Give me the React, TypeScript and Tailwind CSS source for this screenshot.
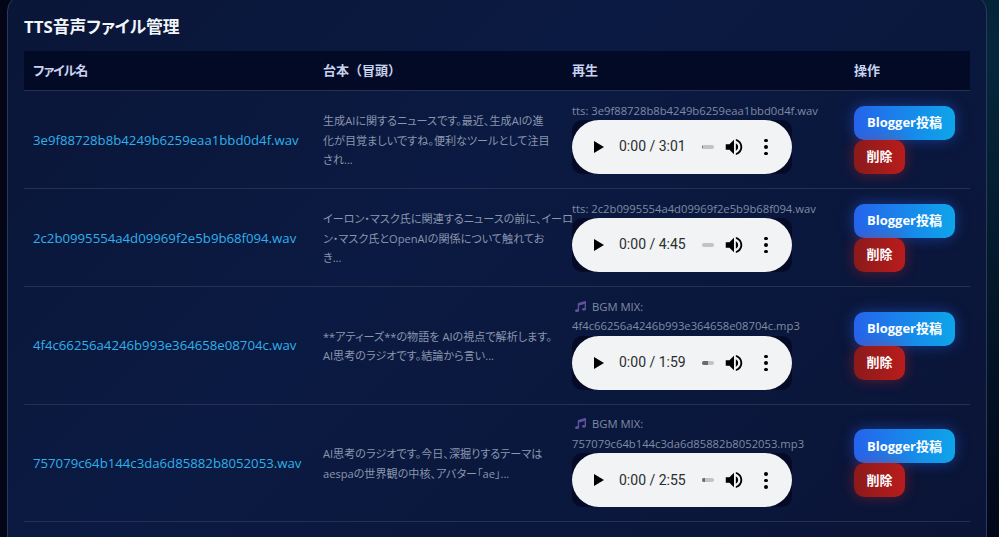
import { FaMusic } from "react-icons/fa";

const rows = [
  {
    file: "3e9f88728b8b4249b6259eaa1bbd0d4f.wav",
    script: ["生成AIに関するニュースです。最近、生成AIの進", "化が目覚ましいですね。便利なツールとして注目", "され..."],
    label: "tts: 3e9f88728b8b4249b6259eaa1bbd0d4f.wav",
    bgm: false,
    time: "3:01",
    progress: 1,
  },
  {
    file: "2c2b0995554a4d09969f2e5b9b68f094.wav",
    script: ["イーロン・マスク氏に関連するニュースの前に、イーロ", "ン・マスク氏とOpenAIの関係について触れてお", "き..."],
    label: "tts: 2c2b0995554a4d09969f2e5b9b68f094.wav",
    bgm: false,
    time: "4:45",
    progress: 0,
  },
  {
    file: "4f4c66256a4246b993e364658e08704c.wav",
    script: ["**アティーズ**の物語を AIの視点で解析します。", "AI思考のラジオです。結論から言い..."],
    label: "4f4c66256a4246b993e364658e08704c.mp3",
    bgm: true,
    time: "1:59",
    progress: 6,
  },
  {
    file: "757079c64b144c3da6d85882b8052053.wav",
    script: ["AI思考のラジオです。今日、深掘りするテーマは", "aespaの世界観の中核、アバター「ae」..."],
    label: "757079c64b144c3da6d85882b8052053.mp3",
    bgm: true,
    time: "2:55",
    progress: 3,
  },
];

function AudioBar({ time, progress }: { time: string; progress: number }) {
  return (
    <div className="w-[220px] h-[54px] rounded-[10px] bg-[#050a26]">
      <div className="flex items-center h-full rounded-full bg-[#f1f3f4] text-[#2b2d2f] font-['Roboto',sans-serif]">
        <svg className="ml-[22px] w-[10px] h-[12px]" viewBox="0 0 10 12">
          <path d="M0 0L10 6L0 12Z" fill="#000" />
        </svg>
        <span className="ml-[15px] w-[83px] text-[14px] whitespace-nowrap">0:00 / {time}</span>
        <div className="w-[12px] h-[4px] rounded-full bg-[#c2c3c4] overflow-hidden">
          <div className="h-full bg-[#6a6b6c]" style={{ width: progress }} />
        </div>
        <svg className="ml-[9px] w-[22px] h-[22px]" viewBox="0 0 24 24">
          <path
            d="M3 9v6h4l5 5V4L7 9H3zm13.5 3c0-1.77-1.02-3.29-2.5-4.03v8.05c1.48-.73 2.5-2.25 2.5-4.02zM14 3.23v2.06c2.89.86 5 3.54 5 6.71s-2.11 5.85-5 6.71v2.06c4.01-.91 7-4.49 7-8.77s-2.99-7.86-7-8.77z"
            fill="#000"
          />
        </svg>
        <div className="ml-[19px] flex flex-col gap-[3px]">
          <span className="w-[3.5px] h-[3.5px] rounded-full bg-black" />
          <span className="w-[3.5px] h-[3.5px] rounded-full bg-black" />
          <span className="w-[3.5px] h-[3.5px] rounded-full bg-black" />
        </div>
      </div>
    </div>
  );
}

export default function App() {
  return (
    <div className="h-[537px] w-[999px] overflow-hidden bg-[radial-gradient(circle_at_100%_10%,#04283a_0%,#020617_45%)] pl-[7px] font-['Open_Sans','Noto_Sans_CJK_JP',sans-serif] [font-feature-settings:'palt']">
      <div className="-mt-[5px] w-[980px] h-[600px] rounded-2xl border border-[#2a3a5e] bg-[linear-gradient(135deg,#0a1638_0%,#0b1a42_40%,#0a1436_100%)] px-4 pt-[15px]">
        <h2 className="h-[40px] text-[16.8px] leading-[32px] font-bold text-[#f1f5f9]">TTS音声ファイル管理</h2>
        <div className="grid grid-cols-[289px_249px_282px_126px] h-[40px] items-center bg-[#030a26] border-b border-[#26314f] text-[13px] font-bold text-[#c7d2ee]">
          <div className="pl-[9px] tracking-[-1px]">ファイル名</div>
          <div className="pl-[10px] [font-feature-settings:normal]">台本（冒頭）</div>
          <div className="pl-[10px]">再生</div>
          <div className="pl-[10px]">操作</div>
        </div>
        {rows.map((row) => (
          <div
            key={row.file}
            className="grid grid-cols-[289px_249px_282px_126px] items-center border-b border-[#26314f]"
          >
            <div className="pl-[9px] pt-[2px] text-[13.2px] text-[#2fb0ea] whitespace-nowrap">{row.file}</div>
            <div className="pl-[10px] pt-[2px] text-[11.1px] leading-[19.5px] text-[#8a96ae] whitespace-nowrap">
              {row.script.map((line) => (
                <div key={line}>{line}</div>
              ))}
            </div>
            <div className="pl-[10px] pt-[9.6px] pb-[13.8px] text-[11.25px] leading-[19.6px] text-[#7f8ba3] whitespace-nowrap">
              {row.bgm && (
                <div className="flex items-center gap-[6px] pl-[3px]">
                  <FaMusic className="w-[11px] h-[11px] text-[#5f4f9c]" />
                  BGM MIX:
                </div>
              )}
              <div>{row.label}</div>
              <AudioBar time={row.time} progress={row.progress} />
            </div>
            <div className="pl-[10px] pt-[1px] flex flex-col items-start">
              <button className="h-[34px] w-[101px] rounded-[10px] bg-gradient-to-r from-[#2563eb] to-[#0ea5e9] text-[13px] font-bold text-white shadow-[0_0_14px_rgba(37,99,235,0.5)]">
                Blogger投稿
              </button>
              <button className="h-[34px] w-[51px] rounded-[10px] bg-gradient-to-r from-[#8b1a1a] to-[#b91c1c] text-[13px] font-bold text-white shadow-[0_0_14px_rgba(220,38,38,0.4)]">
                削除
              </button>
            </div>
          </div>
        ))}
      </div>
    </div>
  );
}
